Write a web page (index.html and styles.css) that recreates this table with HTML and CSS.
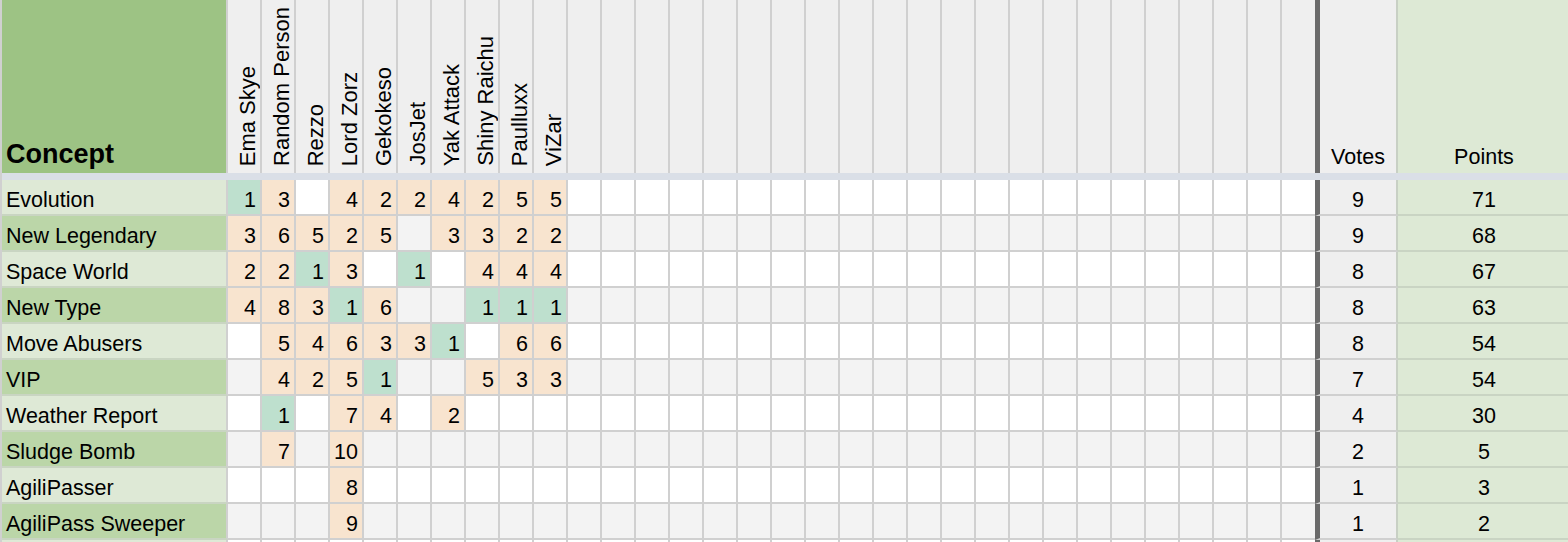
FILE: index.html
```html
<!DOCTYPE html>
<html lang="en">
<head>
    <meta charset="UTF-8">
    <meta name="viewport" content="width=device-width, initial-scale=1.0">
    <title>Concept Votes</title>
    <link rel="stylesheet" href="styles.css">
</head>
<body>

    <div class="sheet" id="sheet"></div>

    <script>
        const names = ['Ema Skye', 'Random Person', 'Rezzo', 'Lord Zorz', 'Gekokeso', 'JosJet', 'Yak Attack', 'Shiny Raichu', 'Paulluxx', 'ViZar'];

        // votes per judge, "g" = first pick (green)
        const rows = [
            ['Evolution', ['1g', '3', '', '4', '2', '2', '4', '2', '5', '5'], 9, 71],
            ['New Legendary', ['3', '6', '5', '2', '5', '', '3', '3', '2', '2'], 9, 68],
            ['Space World', ['2', '2', '1g', '3', '', '1g', '', '4', '4', '4'], 8, 67],
            ['New Type', ['4', '8', '3', '1g', '6', '', '', '1g', '1g', '1g'], 8, 63],
            ['Move Abusers', ['', '5', '4', '6', '3', '3', '1g', '', '6', '6'], 8, 54],
            ['VIP', ['', '4', '2', '5', '1g', '', '', '5', '3', '3'], 7, 54],
            ['Weather Report', ['', '1g', '', '7', '4', '', '2'], 4, 30],
            ['Sludge Bomb', ['', '7', '', '10'], 2, 5],
            ['AgiliPasser', ['', '', '', '8'], 1, 3],
            ['AgiliPass Sweeper', ['', '', '', '9'], 1, 2],
            ['', [], '', '']
        ];

        const COLS = 32;

        function buildSheet() {
            const sheet = document.getElementById('sheet');
            let html = '<div class="cell concept-head">Concept</div>';

            for (let i = 0; i < COLS; i++) {
                const n = names[i];
                html += `<div class="cell name${i === COLS - 1 ? ' last' : ''}">${n ? `<span>${n}</span>` : ''}</div>`;
            }
            html += '<div class="cell votes-head">Votes</div>';
            html += '<div class="cell points-head">Points</div>';
            html += '<div class="band"></div>';

            rows.forEach((r, i) => {
                const alt = i % 2 === 1;
                html += `<div class="cell label${alt ? ' mid' : ''}">${r[0]}</div>`;
                for (let c = 0; c < COLS; c++) {
                    const v = r[1][c] || '';
                    let cls = alt ? 'alt' : '';
                    if (v) cls = v.endsWith('g') ? 'g' : 'o';
                    html += `<div class="cell num ${cls}${c === COLS - 1 ? ' last' : ''}">${v.replace('g', '')}</div>`;
                }
                html += `<div class="cell votes">${r[2]}</div>`;
                html += `<div class="cell points">${r[3]}</div>`;
            });

            sheet.innerHTML = html;
        }

        document.addEventListener('DOMContentLoaded', buildSheet);
    </script>
</body>
</html>
```

FILE: styles.css
```css
body {
    margin: 0;
    overflow: hidden;
    background: #fff;
    color: #000;
    font-family: "Liberation Sans", Arial, sans-serif;
    font-size: 21.5px;
}

.sheet {
    display: grid;
    grid-template-columns: 226px repeat(31, 34px) 33px 83px 172px;
    grid-template-rows: 173px 7px;
    grid-auto-rows: 36px;
    width: max-content;
    border-left: 2px solid #d0d0d0;
}

.cell {
    box-sizing: border-box;
    display: flex;
    align-items: flex-end;
    line-height: 1;
    white-space: nowrap;
    border-right: 2px solid #d0d0d0;
    border-bottom: 2px solid #d0d0d0;
    padding-bottom: 3px;
}
.cell.last { border-right: none; }

/* header row */
.concept-head {
    background: #9dc384;
    font-size: 27px;
    font-weight: bold;
    padding: 0 0 5px 4px;
    border-bottom: none;
}
.name {
    background: #efefef;
    justify-content: flex-end;
    padding: 0 1px 7px 0;
    border-bottom: none;
}
.name span {
    writing-mode: vertical-rl;
    transform: rotate(180deg);
    font-size: 22px;
    line-height: 1;
}
.votes-head, .points-head {
    justify-content: center;
    padding-bottom: 5px;
    border-bottom: none;
}
.votes-head { background: #efefef; border-left: 5px solid #6a6a6a; border-right-color: #c8d0c4; }
.points-head { background: #dde9d5; border-right: none; }

.band { grid-column: 1 / -1; background: #dadfe7; }

/* body rows */
.label {
    background: #dee9d6;
    padding-left: 4px;
    border-bottom-color: #c9d5c2;
}
.label.mid { background: #bbd6a8; }

.num { justify-content: flex-end; padding-right: 4px; }
.num.alt { background: #f3f3f3; }
.num.o { background: #f8e4cf; }
.num.g { background: #bee0ce; }

.votes {
    background: #efefef;
    justify-content: center;
    border-left: 5px solid #6a6a6a;
    border-right-color: #c8d0c4;
}
.points {
    background: #dde9d5;
    justify-content: center;
    border-right: none;
    border-bottom-color: #c9d4c3;
}
```
